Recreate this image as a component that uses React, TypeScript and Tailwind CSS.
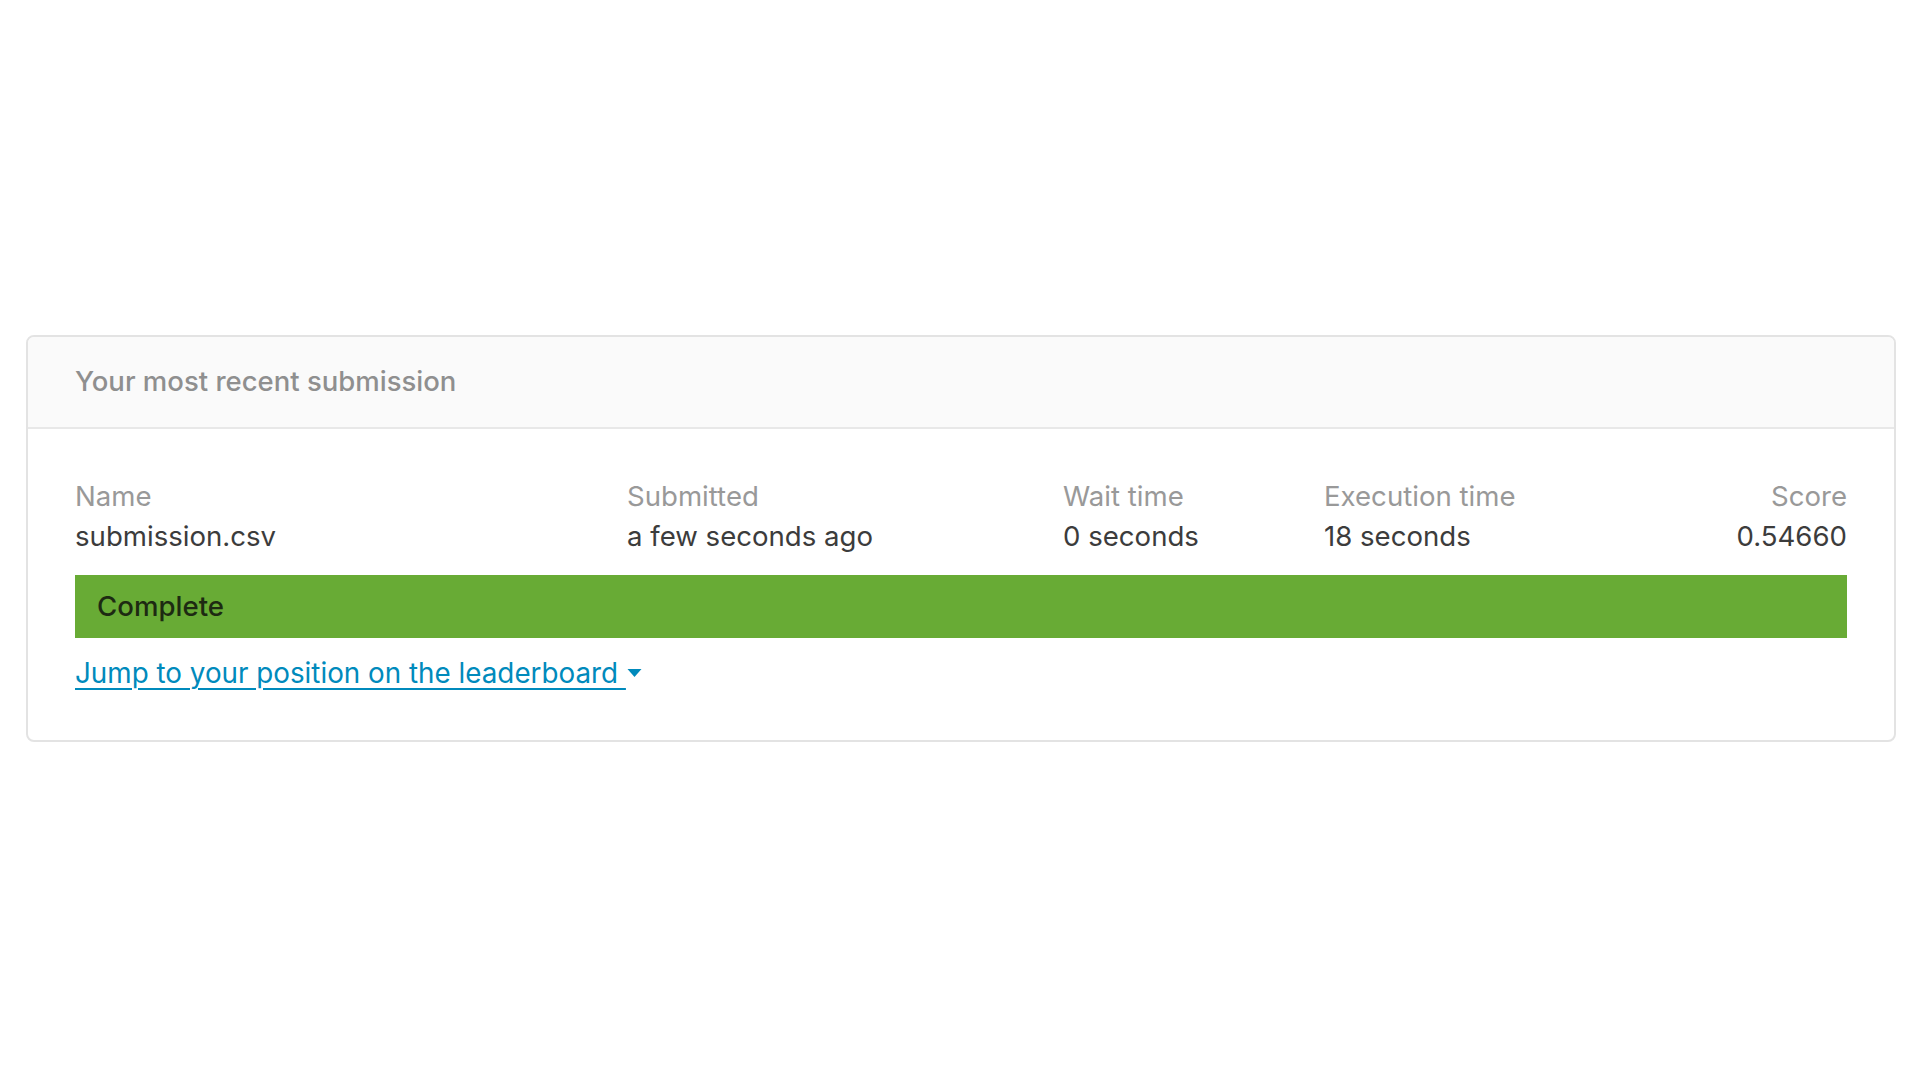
const cols = [
  { label: "Name", value: "submission.csv" },
  { label: "Submitted", value: "a few seconds ago" },
  { label: "Wait time", value: "0 seconds" },
  { label: "Execution time", value: "18 seconds" },
];

export default function App() {
  return (
    <div className="min-h-screen bg-white pt-[335px] pl-[26px] pr-[24px] font-['Inter',sans-serif]">
      <div className="border-2 border-[#e3e3e3] rounded-[8px] overflow-hidden">
        <div className="bg-[#fafafa] border-b-2 border-[#e8e8e8] h-[92px] flex items-center px-[47px]">
          <h2 className="text-[27.5px] text-[#8f8f8f] font-medium">Your most recent submission</h2>
        </div>

        <div className="px-[47px] pt-[47px] pb-[43px]">
          <div className="grid grid-cols-[552px_436px_261px_1fr_auto] text-[27.6px] leading-[40px]">
            {cols.map((c) => (
              <div key={c.label}>
                <div className="text-[#999999]">{c.label}</div>
                <div className="text-[#3c3c3c]">{c.value}</div>
              </div>
            ))}
            <div className="text-right">
              <div className="text-[#999999]">Score</div>
              <div className="text-[#3c3c3c]">0.54660</div>
            </div>
          </div>

          <div className="mt-[19px] h-[63px] bg-[#68ab35] flex items-center px-[22px]">
            <span className="text-[27.6px] font-medium text-[#1d2a12]">Complete</span>
          </div>

          <div className="mt-[15px] leading-[40px]">
            <a href="#" className="text-[27.8px] text-[#008abc] underline underline-offset-[5px] decoration-2 inline-flex items-center">
              <span>Jump to your position on the leaderboard&nbsp;</span>
              <svg width="17" height="10" viewBox="0 0 16 10">
                <path d="M1 1 H15 L8 9 Z" fill="#008abc" />
              </svg>
            </a>
          </div>
        </div>
      </div>
    </div>
  );
}
